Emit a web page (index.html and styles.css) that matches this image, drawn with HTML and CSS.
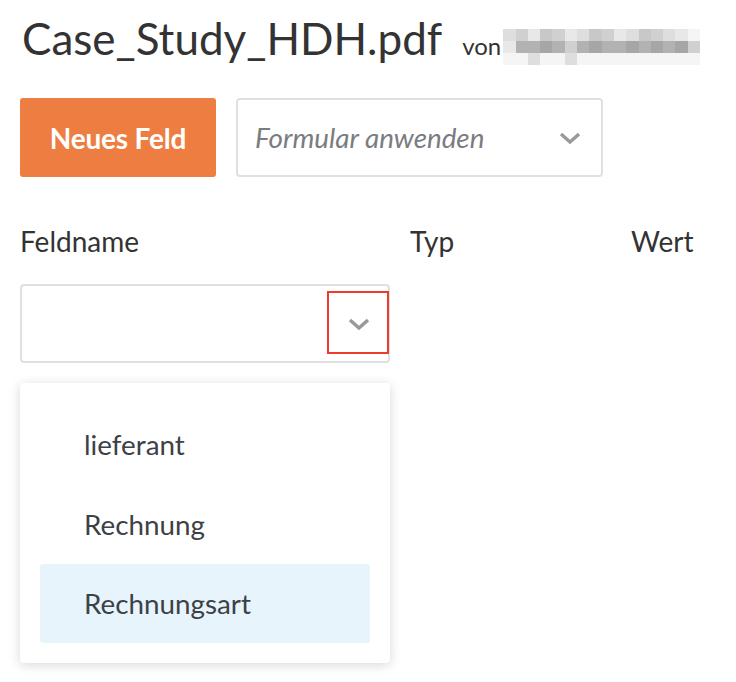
FILE: index.html
```html
<!DOCTYPE html>
<html lang="de">
<head>
<meta charset="utf-8">
<title>Case_Study_HDH.pdf</title>
<link rel="stylesheet" href="styles.css">
</head>
<body>
<div class="page">
  <header class="title-row">
    <h1 class="title">Case_Study_HDH.pdf</h1>
    <span class="by">von</span>
    <span class="blurred" aria-hidden="true">
      <span class="row r1"><i class="c1"></i><i class="c2"></i><i class="c3"></i><i class="c4"></i><i class="c2"></i><i class="c3"></i><i class="c1"></i><i class="c4"></i><i class="c2"></i><i class="c3"></i><i class="c1"></i><i class="c4"></i><i class="c2"></i><i class="c1"></i><i class="c3"></i><i class="c5"></i></span>
      <span class="row r2"><i class="c3"></i><i class="c6"></i><i class="c6"></i><i class="c7"></i><i class="c6"></i><i class="c2"></i><i class="c6"></i><i class="c7"></i><i class="c6"></i><i class="c6"></i><i class="c7"></i><i class="c6"></i><i class="c7"></i><i class="c6"></i><i class="c7"></i><i class="c2"></i></span>
      <span class="row r3"><i class="c5"></i><i class="c5"></i><i class="c1"></i><i class="c5"></i><i class="c5"></i><i class="c1"></i><i class="c5"></i><i class="c5"></i><i class="c5"></i><i class="c5"></i><i class="c5"></i><i class="c5"></i><i class="c5"></i><i class="c5"></i><i class="c5"></i><i class="c5"></i></span>
    </span>
  </header>

  <div class="toolbar">
    <button class="btn-primary">Neues Feld</button>
    <div class="select select-form">
      <span class="placeholder">Formular anwenden</span>
      <svg class="chev" viewBox="0 0 22 12" width="22" height="12"><path d="M2 2 L11 10 L20 2" fill="none" stroke="#999" stroke-width="3.4"/></svg>
    </div>
  </div>

  <div class="fields">
    <div class="col-head col-name">Feldname</div>
    <div class="col-head col-type">Typ</div>
    <div class="col-head col-value">Wert</div>

    <div class="name-cell">
      <div class="select select-name">
        <span class="arrow-box">
          <svg class="chev" viewBox="0 0 22 12" width="22" height="12"><path d="M2 2 L11 10 L20 2" fill="none" stroke="#999" stroke-width="3.4"/></svg>
        </span>
      </div>
      <ul class="menu">
        <li class="opt">lieferant</li>
        <li class="opt">Rechnung</li>
        <li class="opt active">Rechnungsart</li>
      </ul>
    </div>
  </div>
</div>
</body>
</html>
```

FILE: styles.css
```css
* { box-sizing: border-box; }
html, body { margin: 0; padding: 0; background: #fff; }
body {
  font-family: Lato, "Open Sans", "Liberation Sans", sans-serif;
  color: #35393d;
}
.page { padding: 0 20px; width: 736px; height: 682px; overflow: hidden; }

.title-row {
  display: flex;
  align-items: baseline;
  height: 76px;
  padding-top: 10px;
}
.title {
  margin: 0 0 0 2px;
  font-weight: 400;
  font-size: 44px;
  line-height: 56px;
  color: #333;
}
.by {
  margin-left: 20px;
  font-size: 24px;
  color: #333;
}
.blurred {
  display: inline-flex;
  flex-direction: column;
  align-self: center;
  margin-left: 2px;
  margin-top: 8px;
}
.blurred .row { display: flex; height: 12px; }
.blurred i { display: block; width: 12.3px; height: 12px; }
.c1 { background: #dedede; }
.c2 { background: #d0d0d0; }
.c3 { background: #e8e8e8; }
.c4 { background: #c8c8c8; }
.c5 { background: #f5f5f5; }
.c6 { background: #b2b2b2; }
.c7 { background: #a6a6a6; }

.toolbar {
  display: flex;
  gap: 20px;
  margin-top: 22px;
}
.btn-primary {
  width: 196px;
  height: 79px;
  border: 0;
  border-radius: 3px;
  background: #ee7d42;
  color: #fff;
  font-family: inherit;
  font-weight: 700;
  font-size: 28px;
  letter-spacing: -0.2px;
}
.select {
  display: flex;
  align-items: center;
  border: 2px solid #e0e0e0;
  border-radius: 4px;
  background: #fff;
}
.select-form {
  width: 367px;
  height: 79px;
  padding: 0 20px 0 17px;
  justify-content: space-between;
}
.placeholder {
  font-style: italic;
  font-size: 27.8px;
  color: #7a7c7f;
}
.chev { display: block; }

.fields {
  display: grid;
  grid-template-columns: 390px 221px auto;
  margin-top: 47px;
}
.col-head {
  font-size: 28px;
  line-height: 34px;
  color: #333;
}
.name-cell {
  grid-column: 1 / 2;
  margin-top: 26px;
  width: 370px;
}
.select-name {
  height: 79px;
  justify-content: flex-end;
  align-items: flex-start;
}
.arrow-box {
  display: flex;
  align-items: center;
  justify-content: center;
  width: 62px;
  height: 63px;
  margin-top: 5px;
  margin-right: -1px;
  border: 2px solid #ef3b2a;
}
.arrow-box .chev { margin-top: 2px; margin-left: 1px; }

.menu {
  list-style: none;
  margin: 20px 0 0;
  padding: 21px 20px 20px;
  width: 370px;
  background: #fff;
  border-radius: 4px;
  box-shadow: 0 2px 12px rgba(0,0,0,0.16);
}
.opt {
  height: 80px;
  display: flex;
  align-items: center;
  padding-left: 44px;
  font-size: 27.8px;
  color: #3c4146;
  border-radius: 3px;
}
.opt.active { background: #e7f4fc; height: 79px; }
```
